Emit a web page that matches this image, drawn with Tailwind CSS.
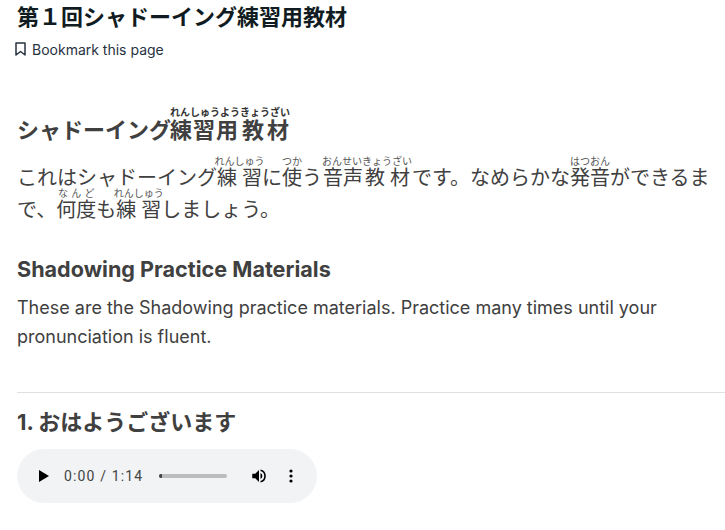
<!DOCTYPE html>
<html lang="ja"><head><meta charset="utf-8">
<script src="https://cdn.jsdelivr.net/npm/@tailwindcss/browser@4"></script>
</head>
<body class="bg-white overflow-hidden h-[530px] font-['Inter','Noto_Sans_CJK_JP',sans-serif]">
<main class="pl-[17px] w-[725px]">
<h1 class="pt-[3px] text-[22px] leading-[28px] font-bold text-[#111c22]">第１回シャドーイング練習用教材</h1>
<div class="mt-[6px] flex items-center gap-[5px] -ml-[3px] h-[24px] text-[14px] text-[#27323f]">
<svg class="w-[13px] h-[14px]" viewBox="0 0 13 14" fill="none" stroke="currentColor" stroke-width="1.5" stroke-linejoin="round"><path d="M2 1h9v12L6.5 9.5 2 13z"/></svg>
<span>Bookmark this page</span></div>
<h2 class="mt-[46px] text-[22px] leading-[46px] font-bold text-[#404040]">シャドーイング<ruby class="[ruby-align:center] -ml-[1px]"><span class="mr-[1px]">練</span><span class="mr-[1px]">習</span><span class="mr-[4px]">用</span><span class="mr-[3px]">教</span><span class="mr-[1px]">材</span><rt class="text-[10px] font-bold text-[#333]">れんしゅうようきょうざい</rt></ruby></h2>
<p class="mt-[3px] text-[20px] leading-[31px] text-[#404040]">これはシャドーイング<ruby>練習<rt class="text-[10px] text-[#555]">れんしゅう</rt></ruby>に<ruby>使<rt class="text-[10px] text-[#555]">つか</rt></ruby>う<ruby class="[ruby-align:center]"><span class="ml-[1px] mr-[2px]">音声</span><span class="mr-[5px]">教</span><span class="mr-[2px]">材</span><rt class="text-[10px] text-[#555]">おんせいきょうざい</rt></ruby>です。なめらかな<ruby>発音<rt class="text-[10px] text-[#555]">はつおん</rt></ruby>ができるまで、<ruby>何度<rt class="text-[10px] text-[#555]">なんど</rt></ruby>も<ruby>練習<rt class="text-[10px] text-[#555]">れんしゅう</rt></ruby>しましょう。</p>
<h2 class="mt-[27px] text-[21.6px] leading-[32px] font-bold text-[#404040]">Shadowing Practice Materials</h2>
<p class="mt-[8px] text-[18px] leading-[29px] text-[#404040]">These are the Shadowing practice materials. Practice many times until your pronunciation is fluent.</p>
<hr class="mt-[41px] border-[#e0e0e0]">
<h3 class="mt-[13px] text-[22px] leading-[32px] font-bold text-[#404040]">1. おはようございます</h3>
<div class="mt-[11px] w-[300px] h-[54px] rounded-full bg-[#f1f3f4] flex items-center pl-[22px] text-[14px] tracking-[1.15px] text-[#444] font-['Roboto',sans-serif]">
<svg class="w-[10px] h-[12px]" viewBox="0 0 10 12"><path d="M0 0l10 6-10 6z" fill="#000"/></svg>
<span class="ml-[15px] w-[80px] whitespace-nowrap">0:00 / 1:14</span>
<span class="ml-[15px] w-[68px] h-[4px] bg-[#bcbcbc] rounded-full"><span class="block w-[3px] h-[4px] rounded-l-full bg-[#444]"></span></span>
<svg class="ml-[23px] w-[18px] h-[18px]" viewBox="0 0 24 24"><path d="M3 9v6h4l5 5V4L7 9zm13.5 3A4.5 4.5 0 0 0 14 8v8a4.5 4.5 0 0 0 2.5-4zM14 3.2v2.1a7 7 0 0 1 0 13.4v2.1a9 9 0 0 0 0-17.6z" fill="#000"/></svg>
<svg class="ml-[21px] w-[4px] h-[14px]" viewBox="0 0 4 14"><circle cx="2" cy="2" r="1.6" fill="#000"/><circle cx="2" cy="7" r="1.6" fill="#000"/><circle cx="2" cy="12" r="1.6" fill="#000"/></svg>
</div>
</main>
</body></html>
